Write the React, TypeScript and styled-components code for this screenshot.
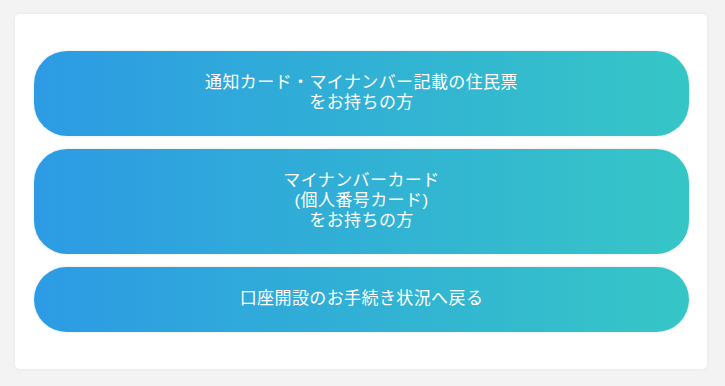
import React from 'react';
import styled, { createGlobalStyle } from 'styled-components';

const GlobalStyle = createGlobalStyle`
  html, body {
    margin: 0;
    padding: 0;
    background: #f3f3f3;
  }
  body {
    font-family: "Liberation Sans", "Noto Sans CJK JP", sans-serif;
  }
`;

const options = [
  { id: 'notice', lines: ['通知カード・マイナンバー記載の住民票', 'をお持ちの方'] },
  { id: 'card', lines: ['マイナンバーカード', '(個人番号カード)', 'をお持ちの方'] },
  { id: 'back', lines: ['口座開設のお手続き状況へ戻る'] },
];

const App = () => {
  return (
    <Page>
      <GlobalStyle />
      <Card>
        {options.map((opt) => (
          <ChoiceButton key={opt.id} type="button">
            {opt.lines.map((line) => (
              <Line key={line}>{line}</Line>
            ))}
          </ChoiceButton>
        ))}
      </Card>
    </Page>
  );
};

export default App;

const Page = styled.div`
  width: 725px;
  height: 386px;
  padding: 14px 18px 0 15px;
  box-sizing: border-box;
`;

const Card = styled.div`
  background: #ffffff;
  border-radius: 5px;
  box-shadow: 0 0 4px rgba(0, 0, 0, 0.06);
  padding: 37px 18px 37px 19px;
  display: flex;
  flex-direction: column;
  gap: 13px;
`;

const ChoiceButton = styled.button`
  width: 100%;
  border: none;
  border-radius: 33px;
  background: linear-gradient(to right, #2c9be4, #36c6c6);
  box-shadow: 0 0 3px rgba(0, 0, 0, 0.12);
  color: #ffffff;
  /* Latin font first keeps the line box inside the 20px pitch; kana/kanji fall back to Noto CJK */
  font-family: "Liberation Sans", "Noto Sans CJK JP", sans-serif;
  font-size: 17px;
  letter-spacing: 0.4px;
  line-height: 20px;
  padding: 22px 20px 23px;
  display: flex;
  flex-direction: column;
  align-items: center;
  cursor: pointer;
  box-sizing: border-box;
`;

const Line = styled.span`
  display: block;
`;
